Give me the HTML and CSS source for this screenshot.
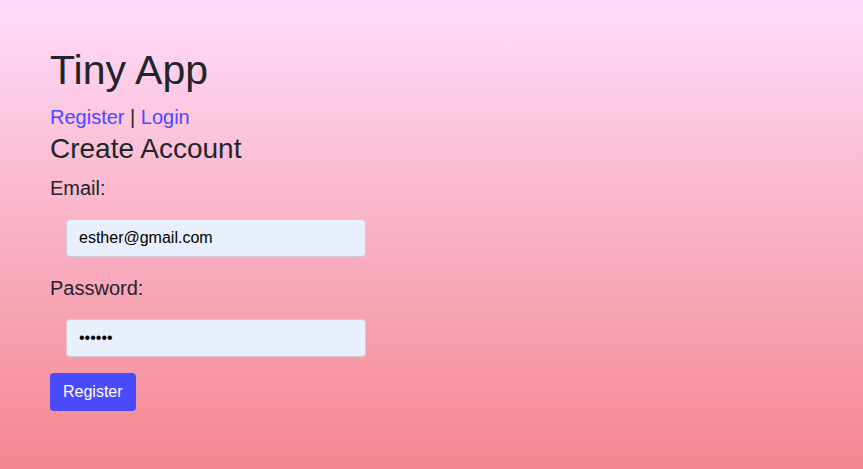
FILE: index.html
```html
<!DOCTYPE html>
<html>
<head>
<meta charset="utf-8">
<link rel="stylesheet" href="styles.css">
</head>
<body>
<main class="page">
  <h1 class="title">Tiny App</h1>
  <nav class="nav"><a href="#">Register</a> | <a href="#">Login</a></nav>
  <h3 class="heading">Create Account</h3>
  <form class="form">
    <label class="label">Email:</label>
    <div class="field"><input class="input" type="text" value="esther@gmail.com"></div>
    <label class="label">Password:</label>
    <div class="field"><input class="input" type="password" value="secret"></div>
    <div><button class="btn" type="button">Register</button></div>
  </form>
</main>
</body>
</html>
```
FILE: styles.css
```css
html, body {
  margin: 0;
  height: 100%;
}
body {
  background: linear-gradient(to bottom, #ffdcfb 0%, #f4868f 100%);
  font-family: "Liberation Sans", Arial, sans-serif;
  color: #212529;
  font-size: 16px;
}
.page {
  padding: 46px 50px 0;
  display: flex;
  flex-direction: column;
}
.title {
  margin: 0 0 14px;
  font-size: 41px;
  font-weight: 400;
  line-height: 48px;
}
.nav {
  font-size: 20px;
  line-height: 30px;
  margin: -6px 0 0;
}
.nav a {
  color: #4a4aff;
  text-decoration: none;
}
.heading {
  margin: 0;
  font-size: 28px;
  font-weight: 400;
  line-height: 34px;
}
.form {
  display: flex;
  flex-direction: column;
  margin-top: 7px;
}
.label {
  font-size: 20px;
  line-height: 30px;
}
.field {
  padding: 16px 16px 16px;
}
.input {
  box-sizing: border-box;
  width: 300px;
  height: 38px;
  border: 1px solid #d3c9d6;
  border-radius: 4px;
  background: #e8f0fe;
  padding: 6px 12px;
  font-family: "Liberation Sans", Arial, sans-serif;
  font-size: 16px;
  color: #000;
}
.btn {
  background: #4a4aff;
  color: #fff;
  border: none;
  border-radius: 4px;
  height: 38px;
  padding: 0 13px;
  font-family: "Liberation Sans", Arial, sans-serif;
  font-size: 16px;
}
```
